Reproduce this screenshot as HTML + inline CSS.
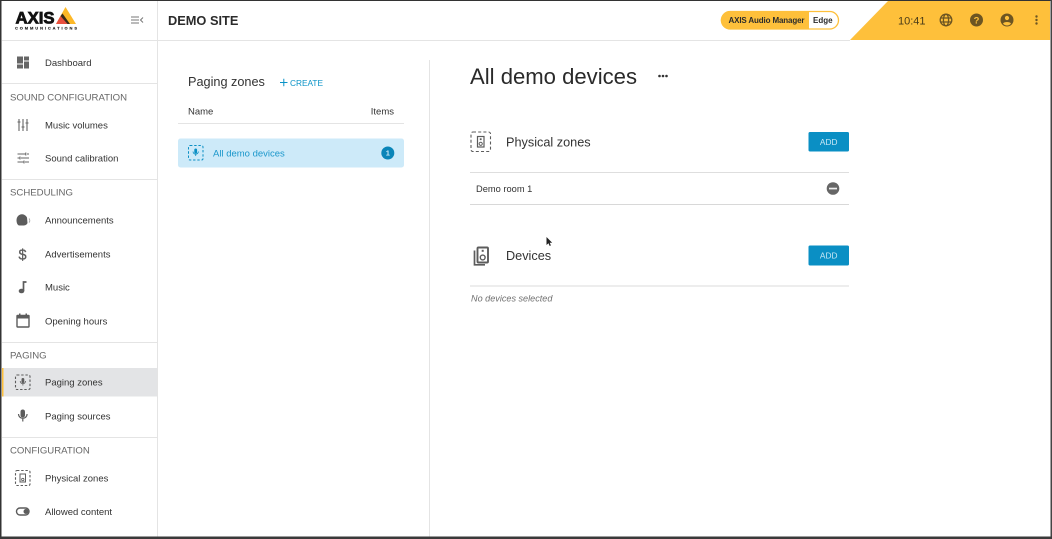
<!DOCTYPE html>
<html><head><meta charset="utf-8"><style>
html,body{margin:0;padding:0;background:#fff;width:1052px;height:539px;overflow:hidden}
svg{display:block;position:absolute;left:0;top:0;filter:blur(.35px)}
text{font-family:"Liberation Sans",sans-serif;fill:#333}
.n{font-size:9.5px}
.h{font-size:9.6px;fill:#666}
.ic{fill:none;stroke:#5c5c5c;stroke-width:1.4}
.dash{fill:none;stroke:#5c5c5c;stroke-width:1.1;stroke-dasharray:2.4 1.8}
.l{stroke:#e4e4e4;stroke-width:1}
</style></head><body>
<svg width="1052" height="539" viewBox="0 0 1052 539" xmlns="http://www.w3.org/2000/svg">
<rect width="1052" height="539" fill="#fff"/>
<!-- top bar -->
<polygon points="888,1 1050,1 1050,40 850,40" fill="#fec03b"/>
<line x1="2" y1="40.500" x2="850" y2="40.500" class="l"/>
<line x1="157.500" y1="1" x2="157.500" y2="537" class="l"/>
<line x1="429.500" y1="60" x2="429.500" y2="537" class="l"/>
<!-- logo -->
<text x="15.500" y="23.500" style="font-size:16.500px;font-weight:bold;fill:#111" stroke="#111" stroke-width=".8" textLength="39" lengthAdjust="spacingAndGlyphs">AXIS</text>
<polygon points="65.500,7 76,24 56,24" fill="#fdb827"/>
<polygon points="60.500,16 68,24 56,24" fill="#e9503f"/>
<polygon points="60.500,16 62.500,13.500 70,24 67.500,24" fill="#3a2a1a"/>
<text x="15" y="29.500" style="font-size:4px;font-weight:bold;fill:#222" stroke="#222" stroke-width=".15" textLength="62" lengthAdjust="spacing">COMMUNICATIONS</text>
<path d="M131 17h8M131 20h8M131 23h8" stroke="#777" stroke-width="1"/>
<path d="M143 17.500l-2.500 2.500 2.500 2.500" fill="none" stroke="#777" stroke-width="1"/>
<text x="168" y="25" style="font-size:12.800px;font-weight:bold;fill:#2b2b2b">DEMO SITE</text>
<!-- pill -->
<rect x="721.500" y="11.500" width="117" height="17.500" rx="8.700" fill="#fff" stroke="#fec03b" stroke-width="1.300"/>
<path d="M730 11h79v18.500h-79a9.200 9.200 0 0 1 0-18.500z" fill="#fec03b"/>
<text x="728.500" y="23" style="font-size:8px;font-weight:bold;fill:#2b2b2b" textLength="76">AXIS Audio Manager</text>
<text x="813" y="23" style="font-size:8px;font-weight:bold;fill:#2b2b2b">Edge</text>
<!-- top right icons -->
<text x="898" y="24.500" style="font-size:11px;fill:#4a3b18">10:41</text>
<g fill="none" stroke="#6d5522" stroke-width="1.300">
<circle cx="946" cy="20" r="5.800"/><ellipse cx="946" cy="20" rx="2.600" ry="5.800"/><path d="M940.500 18h11M940.500 22h11"/>
</g>
<circle cx="976.500" cy="20" r="6.500" fill="#6d5522"/>
<text x="976.500" y="23.500" text-anchor="middle" style="font-size:9.500px;font-weight:bold;fill:#fec03b">?</text>
<circle cx="1007" cy="20" r="6.500" fill="#6d5522"/>
<circle cx="1007" cy="18" r="2.100" fill="#fec03b"/>
<path d="M1003 23.500c1-2 7-2 8 0a5 5 0 0 1-8 0z" fill="#fec03b"/>
<circle cx="1036.500" cy="16.500" r="1.200" fill="#6d5522"/><circle cx="1036.500" cy="20" r="1.200" fill="#6d5522"/><circle cx="1036.500" cy="23.500" r="1.200" fill="#6d5522"/>
<!-- sidebar -->
<line x1="2" y1="83.500" x2="157" y2="83.500" class="l"/>
<line x1="2" y1="179.500" x2="157" y2="179.500" class="l"/>
<line x1="2" y1="342.500" x2="157" y2="342.500" class="l"/>
<line x1="2" y1="437.500" x2="157" y2="437.500" class="l"/>
<rect x="2" y="368" width="155" height="28.500" fill="#e3e4e6"/>
<rect x="2" y="368" width="1.500" height="28.500" fill="#fec03b"/>
<text class="n" x="45" y="66">Dashboard</text>
<text class="h" x="10" y="100.500">SOUND CONFIGURATION</text>
<text class="n" x="45" y="128.500">Music volumes</text>
<text class="n" x="45" y="161.500">Sound calibration</text>
<text class="h" x="10" y="195.500">SCHEDULING</text>
<text class="n" x="45" y="223.500">Announcements</text>
<text class="n" x="45" y="257.500">Advertisements</text>
<text class="n" x="45" y="290.500">Music</text>
<text class="n" x="45" y="324.500">Opening hours</text>
<text class="h" x="10" y="358.500">PAGING</text>
<text class="n" x="45" y="385.500">Paging zones</text>
<text class="n" x="45" y="419.500">Paging sources</text>
<text class="h" x="10" y="453.500">CONFIGURATION</text>
<text class="n" x="45" y="481.500">Physical zones</text>
<text class="n" x="45" y="515">Allowed content</text>
<!-- sidebar icons -->
<g fill="#666">
<rect x="17" y="56.500" width="6" height="7"/><rect x="24" y="56.500" width="5" height="4"/><rect x="17" y="64.500" width="6" height="4"/><rect x="24" y="61.500" width="5" height="7"/>
</g>
<path d="M19 119v12M23 119v12M27 119v12M17.500 122h3M21.500 127h3M25.500 123h3" stroke="#666" stroke-width="1.100" fill="none"/>
<path d="M17.500 154h8M27 154h2M17.500 158h2M21 158h8M17.500 162h6M25 162h4M25.800 152.500v3M20 156.500v3M24 160.500v3" stroke="#666" stroke-width="1" fill="none"/>
<path d="M16.500 220a5.500 5.500 0 0 1 10.500-2.500l.5 5.500c-1 2.500-3.500 2.500-5 2.500h-3c-2 0-3-2.500-3-5.500z" fill="#5c5c5c"/>
<path d="M29 218.500a3 3 0 0 1 0 4" stroke="#aaa" stroke-width="1" fill="none"/>
<text x="22.500" y="259.500" text-anchor="middle" style="font-size:14.500px;fill:#5c5c5c" stroke="#5c5c5c" stroke-width=".3">$</text>
<ellipse cx="21.500" cy="291" rx="2.800" ry="2.300" fill="#5c5c5c"/>
<path d="M23.500 291v-9h3" stroke="#5c5c5c" stroke-width="1.700" fill="none"/>
<rect x="17" y="315.500" width="12" height="11.500" rx=".5" class="ic"/>
<rect x="16.500" y="315" width="13" height="3.500" fill="#5c5c5c"/>
<rect x="19" y="313.500" width="1.500" height="2" fill="#5c5c5c"/><rect x="25.500" y="313.500" width="1.500" height="2" fill="#5c5c5c"/>
<rect x="15.500" y="375" width="14.500" height="14.500" rx="1.500" class="dash"/>
<rect x="21.500" y="378" width="2.800" height="5" rx="1.400" fill="#5c5c5c"/>
<path d="M20.200 381a2.700 2.700 0 0 0 5.400 0M22.900 383.500v2" stroke="#5c5c5c" stroke-width=".8" fill="none"/>
<rect x="20.500" y="409.500" width="4.500" height="8" rx="2.200" fill="#5c5c5c"/>
<path d="M18.500 414a4.300 4.300 0 0 0 8.600 0M22.800 418.500v3" stroke="#5c5c5c" stroke-width="1.200" fill="none"/>
<rect x="15.500" y="470.500" width="14.500" height="15" rx="1.500" class="dash"/>
<rect x="20" y="474" width="5.500" height="8" class="ic" style="stroke-width:1"/>
<circle cx="22.800" cy="479.500" r="1.200" class="ic" style="stroke-width:.8"/>
<rect x="16.500" y="508" width="12.500" height="7" rx="3.500" class="ic"/>
<circle cx="26" cy="511.500" r="2.500" fill="#5c5c5c"/>
<!-- list column -->
<text x="188" y="86" style="font-size:12.700px;fill:#333">Paging zones</text>
<path d="M280 82.500h7.500M283.800 78.800v7.500" stroke="#0a93c7" stroke-width="1"/>
<text x="290" y="85.800" style="font-size:8.300px;fill:#0a93c7">CREATE</text>
<text x="188" y="114.500" style="font-size:9.500px;fill:#333">Name</text>
<text x="394" y="114.500" text-anchor="end" style="font-size:9.500px;fill:#333">Items</text>
<line x1="178" y1="123.500" x2="404" y2="123.500" class="l"/>
<rect x="178" y="138.500" width="226" height="29" rx="2.500" fill="#cdeaf9"/>
<rect x="188.500" y="145.500" width="14.500" height="14.500" rx="1.500" fill="none" stroke="#0a8fc4" stroke-width="1" stroke-dasharray="2.400 1.800"/>
<rect x="194.300" y="148.500" width="2.800" height="5" rx="1.400" fill="#0a8fc4"/>
<path d="M193 151.500a2.700 2.700 0 0 0 5.400 0M195.700 154v2" stroke="#0a8fc4" stroke-width=".8" fill="none"/>
<text x="213" y="156.500" style="font-size:9.500px;fill:#1b97cb">All demo devices</text>
<circle cx="387.800" cy="153" r="6.500" fill="#0a85b8"/>
<text x="387.800" y="155.700" text-anchor="middle" style="font-size:7.500px;font-weight:bold;fill:#cdeaf9">1</text>
<!-- details -->
<text x="470" y="84" style="font-size:22.100px;fill:#2a2a2a">All demo devices</text>
<circle cx="659.500" cy="76" r="1.300" fill="#333"/><circle cx="663" cy="76" r="1.300" fill="#333"/><circle cx="666.500" cy="76" r="1.300" fill="#333"/>
<rect x="471" y="132" width="19.500" height="19.500" rx="2" class="dash" style="stroke-dasharray:3 2.200"/>
<rect x="477.500" y="136.500" width="6.500" height="10.500" class="ic" style="stroke-width:1.200"/>
<circle cx="480.700" cy="143.800" r="1.600" class="ic" style="stroke-width:1"/>
<rect x="479.800" y="138.300" width="1.800" height="1.800" fill="#5c5c5c"/>
<text x="506" y="146.500" style="font-size:12.700px;fill:#333">Physical zones</text>
<rect x="808.500" y="132" width="40.500" height="19.500" rx="1.500" fill="#0a8fc4"/>
<text x="828.700" y="145" text-anchor="middle" style="font-size:8.300px;fill:#c9e8f5">ADD</text>
<line x1="470" y1="172.500" x2="849" y2="172.500" stroke="#dedede"/>
<text x="476" y="192" style="font-size:9.300px;fill:#333">Demo room 1</text>
<circle cx="833" cy="188.500" r="6.300" fill="#666"/>
<rect x="829" y="187.700" width="8" height="1.700" fill="#eee"/>
<line x1="470" y1="204.500" x2="849" y2="204.500" stroke="#d8d8d8"/>
<path d="M546.500 237v8l2-1.800 1.200 2.800 1.200-.6-1.200-2.600 2.500-.1z" fill="#222"/>
<rect x="477.500" y="247.500" width="10.500" height="15" rx="1" fill="none" stroke="#5c5c5c" stroke-width="1.900"/>
<path d="M474.500 250.500v14.300h10.500" fill="none" stroke="#5c5c5c" stroke-width="1.700"/>
<circle cx="482.700" cy="257.500" r="2.400" fill="none" stroke="#5c5c5c" stroke-width="1.400"/>
<rect x="481.700" y="249.800" width="2" height="2" fill="#5c5c5c"/>
<text x="506" y="260" style="font-size:12.700px;fill:#333">Devices</text>
<rect x="808.500" y="245.500" width="40.500" height="20" rx="1.500" fill="#0a8fc4"/>
<text x="828.700" y="258.500" text-anchor="middle" style="font-size:8.300px;fill:#c9e8f5">ADD</text>
<line x1="470" y1="286" x2="849" y2="286" stroke="#e2e2e2" stroke-width="1.300"/>
<text x="471" y="301.500" style="font-size:9.100px;font-style:italic;fill:#707070">No devices selected</text>
<!-- frame -->
<rect x="0" y="0" width="1052" height="1" fill="#333"/>
<rect x="0" y="0" width="1.500" height="539" fill="#333"/>
<rect x="1050.500" y="0" width="1.500" height="539" fill="#444"/>
<rect x="0" y="536.500" width="1052" height="2.500" fill="#3a3a3a"/>
</svg>
</body></html>
